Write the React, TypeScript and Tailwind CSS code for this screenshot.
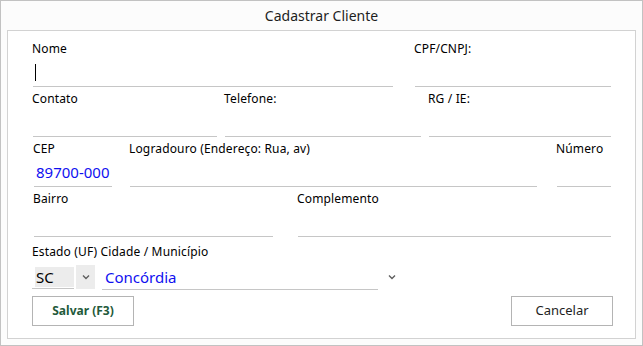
import type { ReactNode } from 'react'

function Chevron({ className }: { className?: string }) {
  return (
    <svg width="8" height="6" viewBox="0 0 8 6" className={className}>
      <polyline points="1,1.5 4,4.5 7,1.5" fill="none" stroke="#5f5f5f" strokeWidth="1.4" />
    </svg>
  )
}

function Field({
  label,
  className,
  children,
}: {
  label: string
  className: string
  children?: ReactNode
}) {
  return (
    <div className={className}>
      <div className="-ml-px h-4 text-[12px] leading-4 tracking-[0.15px] text-black">{label}</div>
      <div className="flex h-[30px] items-end border-b border-[#c6c6c6] pb-[4px] pl-[2px]">
        {children}
      </div>
    </div>
  )
}

export default function App() {
  return (
    <div className="flex h-[346px] w-[643px] flex-col border border-[#c2c2c2] bg-[#fcfcfc] font-['Noto_Sans',sans-serif]">
      <div className="flex h-[29px] items-center justify-center text-[14px] text-[#1e1e1e]">
        Cadastrar Cliente
      </div>

      <div className="mx-[6px] h-[309px] border border-[#d2d2d2] bg-white pl-[25px] pt-[10px]">
        <div className="flex h-[50px]">
          <Field label="Nome" className="w-[360px]">
            <span className="mb-[1px] h-[17px] w-px bg-black" />
          </Field>
          <Field label="CPF/CNPJ:" className="ml-[22px] w-[196px]" />
        </div>

        <div className="flex h-[50px]">
          <Field label="Contato" className="w-[184px]" />
          <Field label="Telefone:" className="ml-[8px] w-[196px]" />
          <Field label="RG / IE:" className="ml-[8px] w-[182px]" />
        </div>

        <div className="flex h-[50px]">
          <Field label="CEP" className="ml-px w-[78px]">
            <span className="text-[15px] leading-5 text-[#1010f0]">89700-000</span>
          </Field>
          <Field label="Logradouro (Endereço: Rua, av)" className="ml-[18px] w-[407px]" />
          <Field label="Número" className="ml-[20px] w-[54px]" />
        </div>

        <div className="flex h-[50px]">
          <Field label="Bairro" className="ml-px w-[239px]" />
          <Field label="Complemento" className="ml-[25px] w-[313px]" />
        </div>

        <div className="-ml-px mt-[3px] h-4 text-[12px] leading-4 tracking-[0.15px] text-black">
          Estado (UF) Cidade / Município
        </div>

        <div className="mt-[5px] flex h-[25px] items-start">
          <div className="-ml-px flex h-[24px] w-[42px] items-end border-b border-[#c6c6c6] pl-[3px]">
            <div className="mb-[1px] flex h-[20px] w-[39px] items-center bg-[#ececec] pl-[1px] text-[15px] text-black">
              SC
            </div>
          </div>
          <div className="ml-[2px] flex h-[24px] w-[19px] items-center justify-center bg-[#ececec]">
            <Chevron />
          </div>
          <div className="ml-[7px] flex h-[25px] w-[276px] items-center border-b border-[#c6c6c6] pl-[3px] text-[15px] text-[#1010f0]">
            Concórdia
          </div>
          <div className="ml-[10px] flex h-[24px] items-center">
            <Chevron />
          </div>
        </div>

        <div className="-ml-px mt-[6px] flex">
          <button className="h-[30px] w-[102px] border border-[#b4b4b4] bg-white text-[12px] font-bold text-[#235a3a]">
            Salvar (F3)
          </button>
          <button className="ml-[377px] h-[30px] w-[102px] border border-[#b4b4b4] bg-white text-[13px] text-[#1e1e1e]">
            Cancelar
          </button>
        </div>
      </div>
    </div>
  )
}
